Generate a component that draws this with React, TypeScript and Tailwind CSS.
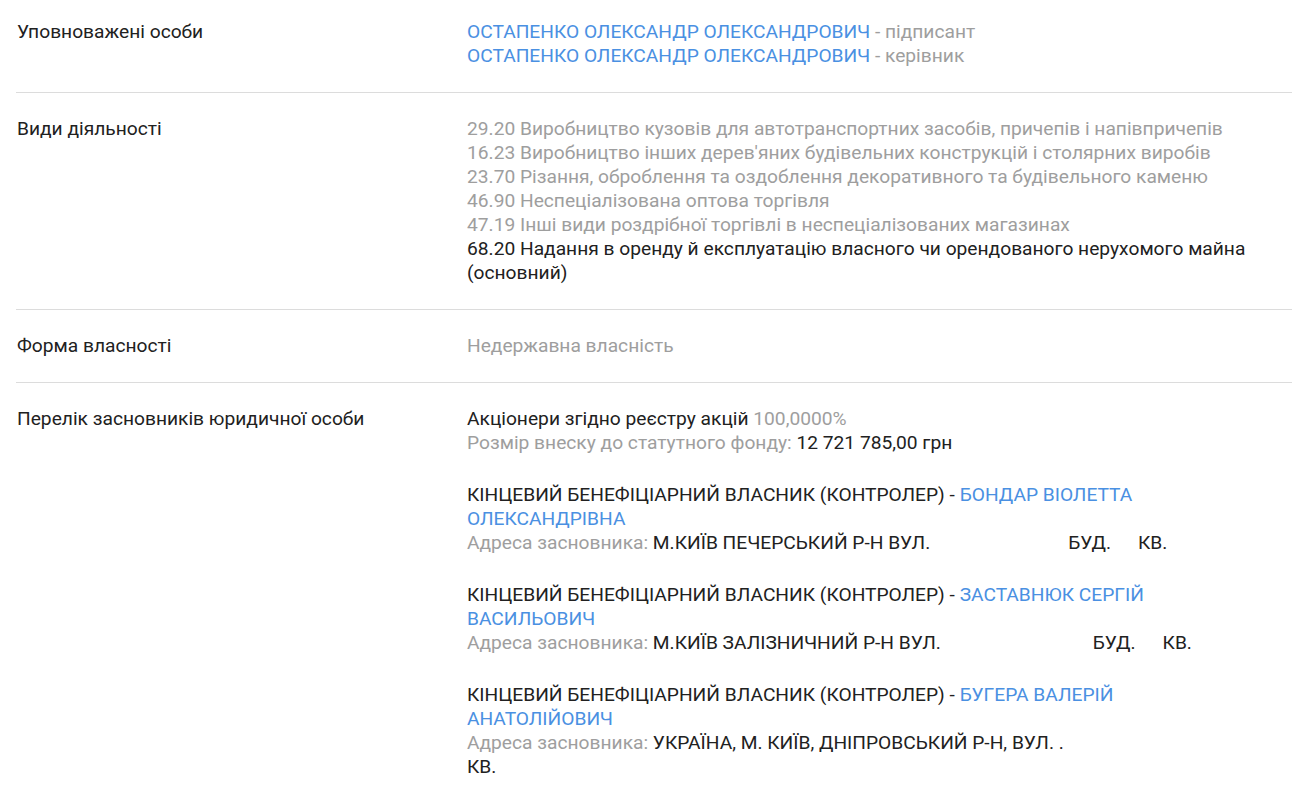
import React from 'react';

const blue = 'text-[#4a90e2]';
const gray = 'text-[#9e9e9e]';
const dark = 'text-[#212121]';

const Row: React.FC<{ label: string; first?: boolean; last?: boolean; children: React.ReactNode }> = ({ label, first, last, children }) => (
  <div className={`grid grid-cols-[450px_1fr] ${first ? 'pt-5' : 'pt-6'} pb-6 ${last ? '' : 'border-b border-[#dcdcdc]'}`}>
    <div className={`${dark} pl-px`}>{label}</div>
    <div className="pl-px pr-8">{children}</div>
  </div>
);

const Gap: React.FC<{ w: number }> = ({ w }) => <span className="inline-block" style={{ width: w }} />;

export default function App() {
  const activities = [
    '29.20 Виробництво кузовів для автотранспортних засобів, причепів і напівпричепів',
    '16.23 Виробництво інших дерев\'яних будівельних конструкцій і столярних виробів',
    '23.70 Різання, оброблення та оздоблення декоративного та будівельного каменю',
    '46.90 Неспеціалізована оптова торгівля',
    '47.19 Інші види роздрібної торгівлі в неспеціалізованих магазинах',
  ];

  return (
    <div className="min-h-screen bg-white px-4 font-['Roboto',sans-serif] text-[19.2px] leading-6">
      <Row label="Уповноважені особи" first>
        <div>
          <span className={blue}>ОСТАПЕНКО ОЛЕКСАНДР ОЛЕКСАНДРОВИЧ</span>
          <span className={gray}> - підписант</span>
        </div>
        <div>
          <span className={blue}>ОСТАПЕНКО ОЛЕКСАНДР ОЛЕКСАНДРОВИЧ</span>
          <span className={gray}> - керівник</span>
        </div>
      </Row>

      <Row label="Види діяльності">
        {activities.map(a => (
          <div key={a} className={gray}>{a}</div>
        ))}
        <div className={dark}>68.20 Надання в оренду й експлуатацію власного чи орендованого нерухомого майна (основний)</div>
      </Row>

      <Row label="Форма власності">
        <div className={gray}>Недержавна власність</div>
      </Row>

      <Row label="Перелік засновників юридичної особи" last>
        <div className={dark}>
          Акціонери згідно реєстру акцій <span className={gray}>100,0000%</span>
        </div>
        <div>
          <span className={gray}>Розмір внеску до статутного фонду: </span>
          <span className={dark}>12 721 785,00 грн</span>
        </div>

        <div className={`mt-7 ${dark}`}>
          КІНЦЕВИЙ БЕНЕФІЦІАРНИЙ ВЛАСНИК (КОНТРОЛЕР) - <span className={blue}>БОНДАР ВІОЛЕТТА ОЛЕКСАНДРІВНА</span>
        </div>
        <div>
          <span className={gray}>Адреса засновника: </span>
          <span className={dark}>М.КИЇВ ПЕЧЕРСЬКИЙ Р-Н ВУЛ.<Gap w={138} />БУД.<Gap w={27} />КВ.</span>
        </div>

        <div className={`mt-7 ${dark}`}>
          КІНЦЕВИЙ БЕНЕФІЦІАРНИЙ ВЛАСНИК (КОНТРОЛЕР) - <span className={blue}>ЗАСТАВНЮК СЕРГІЙ ВАСИЛЬОВИЧ</span>
        </div>
        <div>
          <span className={gray}>Адреса засновника: </span>
          <span className={dark}>М.КИЇВ ЗАЛІЗНИЧНИЙ Р-Н ВУЛ.<Gap w={152} />БУД.<Gap w={27} />КВ.</span>
        </div>

        <div className={`mt-7 ${dark}`}>
          КІНЦЕВИЙ БЕНЕФІЦІАРНИЙ ВЛАСНИК (КОНТРОЛЕР) - <span className={blue}>БУГЕРА ВАЛЕРІЙ АНАТОЛІЙОВИЧ</span>
        </div>
        <div>
          <span className={gray}>Адреса засновника: </span>
          <span className={dark}>УКРАЇНА, М. КИЇВ, ДНІПРОВСЬКИЙ Р-Н, ВУЛ. .<Gap w={180} /> КВ.</span>
        </div>
      </Row>
    </div>
  );
}
